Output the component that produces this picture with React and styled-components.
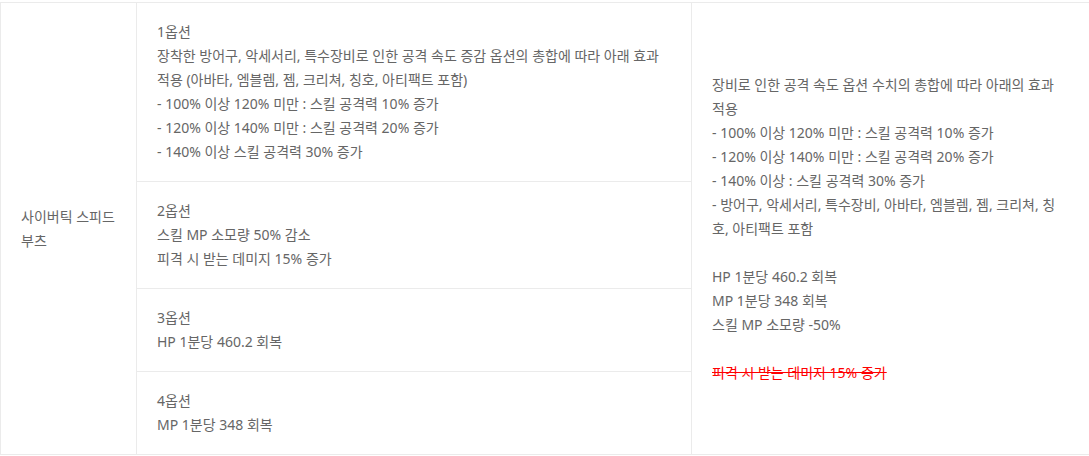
import React from "react";
import styled, { createGlobalStyle } from "styled-components";

const Global = createGlobalStyle`
  html, body { margin: 0; padding: 0; background: #fff; overflow: hidden; }
  body { font-family: "Noto Sans", "Noto Sans CJK KR", sans-serif; }
`;

const Wrap = styled.div`
  padding-top: 2px;
  width: 1100px;
`;

const Table = styled.table`
  border-collapse: collapse;
  width: 1090px;
  table-layout: fixed;
  font-size: 14px;
  line-height: 24px;
  color: #666;
`;

const Cell = styled.td`
  border: 1px solid #ebebeb;
  padding: 17px 20px;
  vertical-align: middle;
  text-align: left;
`;

const Strike = styled.span`
  color: #ff0000;
  text-decoration: line-through;
`;

const options = [
  {
    title: "1옵션",
    lines: [
      "장착한 방어구, 악세서리, 특수장비로 인한 공격 속도 증감 옵션의 총합에 따라 아래 효과 적용 (아바타, 엠블렘, 젬, 크리쳐, 칭호, 아티팩트 포함)",
      "- 100% 이상 120% 미만 : 스킬 공격력 10% 증가",
      "- 120% 이상 140% 미만 : 스킬 공격력 20% 증가",
      "- 140% 이상 스킬 공격력 30% 증가",
    ],
  },
  { title: "2옵션", lines: ["스킬 MP 소모량 50% 감소", "피격 시 받는 데미지 15% 증가"] },
  { title: "3옵션", lines: ["HP 1분당 460.2 회복"] },
  { title: "4옵션", lines: ["MP 1분당 348 회복"] },
];

const Line = styled.div``;

export default function App() {
  return (
    <Wrap>
      <Global />
      <Table>
        <colgroup>
          <col style={{ width: 136 }} />
          <col style={{ width: 555 }} />
          <col />
        </colgroup>
        <tbody>
          {options.map((o, i) => (
            <tr key={o.title}>
              {i === 0 && <Cell rowSpan={4}>사이버틱 스피드 부츠</Cell>}
              <Cell>
                <Line>{o.title}</Line>
                {o.lines.map((l) => (
                  <Line key={l}>{l}</Line>
                ))}
              </Cell>
              {i === 0 && (
                <Cell rowSpan={4}>
                  <Line>장비로 인한 공격 속도 옵션 수치의 총합에 따라 아래의 효과 적용</Line>
                  <Line>- 100% 이상 120% 미만 : 스킬 공격력 10% 증가</Line>
                  <Line>- 120% 이상 140% 미만 : 스킬 공격력 20% 증가</Line>
                  <Line>- 140% 이상 : 스킬 공격력 30% 증가</Line>
                  <Line>- 방어구, 악세서리, 특수장비, 아바타, 엠블렘, 젬, 크리쳐, 칭호, 아티팩트 포함</Line>
                  <br />
                  <Line>HP 1분당 460.2 회복</Line>
                  <Line>MP 1분당 348 회복</Line>
                  <Line>스킬 MP 소모량 -50%</Line>
                  <br />
                  <Line>
                    <Strike>피격 시 받는 데미지 15% 증가</Strike>
                  </Line>
                </Cell>
              )}
            </tr>
          ))}
        </tbody>
      </Table>
    </Wrap>
  );
}
